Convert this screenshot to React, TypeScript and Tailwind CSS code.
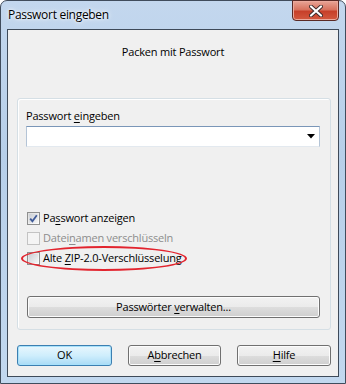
function Check({ checked, disabled }: { checked?: boolean; disabled?: boolean }) {
  return (
    <div
      className={`w-[13px] h-[13px] border flex items-center justify-center ${
        disabled ? 'border-[#c3c3c3] bg-[#f4f4f4]' : 'border-[#8e8f8f] bg-gradient-to-br from-[#dcdcdc] to-[#ffffff]'
      }`}
    >
      <div
        className={`w-[9px] h-[9px] ${
          disabled ? 'bg-[#f4f4f4]' : 'bg-gradient-to-br from-[#cbcfd5] to-[#f6f6f6]'
        } flex items-center justify-center`}
      >
        {checked && (
          <svg width="9" height="9" viewBox="0 0 9 9">
            <path d="M1.2 4.6 L3.4 7.2 L7.8 1.2" fill="none" stroke="#3f5a98" strokeWidth="1.8" />
          </svg>
        )}
      </div>
    </div>
  );
}

function Btn({ children, primary, className = '' }: { children: React.ReactNode; primary?: boolean; className?: string }) {
  return (
    <div
      className={`h-[21px] rounded-[3px] border flex items-center justify-center text-[#000] ${
        primary
          ? 'border-[#3c7fb1] bg-gradient-to-b from-[#e8f6fd] via-[#cfeefc] to-[#a9dbf6] shadow-[inset_0_0_0_1px_#a7e1fb]'
          : 'border-[#707070] bg-[linear-gradient(#f2f2f2_0%,#ebebeb_50%,#dddddd_51%,#cfcfcf_100%)] shadow-[inset_0_0_0_1px_#fcfcfc]'
      } ${className}`}
    >
      {children}
    </div>
  );
}

export default function App() {
  return (
    <div className="w-[346px] h-[384px] bg-white font-['Open_Sans',sans-serif] text-[11px] tracking-[-0.2px] text-black">
      <div className="w-full h-full rounded-t-[7px] border border-[#404c5c] bg-[linear-gradient(180deg,#c3d7ee_0%,#b7cfe9_40%,#c2d8ef_100%)] flex flex-col">
        {/* title bar */}
        <div className="h-[28px] flex items-start">
          <div className="pl-[7px] pt-[5px] text-[12px] tracking-[-0.3px] leading-[18px] text-black [text-shadow:0_0_6px_#ffffff,0_0_3px_#ffffff]">
            Passwort eingeben
          </div>
          <div className="ml-auto mr-[6px] -mt-[1px] w-[47px] h-[21px] rounded-b-[4px] border border-[#5a2a26] bg-[linear-gradient(180deg,#e8a597_0%,#d8735f_45%,#c7402a_55%,#d3593f_100%)] shadow-[inset_0_0_0_1px_#eba99c] flex items-center justify-center">
            <svg width="14" height="12" viewBox="0 0 14 12">
              <path d="M2 1.5 L12 10.5 M12 1.5 L2 10.5" stroke="#3b2a2a" strokeWidth="4" strokeLinecap="round" />
              <path d="M2 1.5 L12 10.5 M12 1.5 L2 10.5" stroke="#ffffff" strokeWidth="2.2" strokeLinecap="round" />
            </svg>
          </div>
        </div>

        {/* client area */}
        <div className="mx-[6px] h-[348px] border border-[#3e4a59] bg-[#f0f0f0] flex flex-col">
          <div className="pt-[14px] h-[30px] text-center leading-[15px]">Packen mit Passwort</div>

          {/* group box */}
          <div className="mt-[38px] ml-[9px] w-[314px] h-[232px] border border-[#d5dfe5] rounded-[3px] shadow-[inset_1px_1px_0_#ffffff] flex flex-col px-[8px]">
            <div className="mt-[9px] h-[16px] leading-[16px]">
              Passwort <span className="underline underline-offset-[2px]">e</span>ingeben
            </div>
            <div className="mt-[2px] w-[294px] h-[21px] border border-[#abadb3] border-t-[#7a96b8] border-b-[#e3e9ef] border-l-[#b4c4d6] border-r-[#b4c4d6] bg-white flex items-center justify-end pr-[4px]">
              <svg width="8" height="5" viewBox="0 0 8 5">
                <path d="M0 0 H8 L4 4.5 Z" fill="#000" />
              </svg>
            </div>

            <div className="mt-[63px] flex flex-col gap-[4px] pl-[1px]">
              <div className="h-[16px] flex items-center gap-[3px]">
                <Check checked />
                <span>
                  Pa<span className="underline underline-offset-[2px]">s</span>swort anzeigen
                </span>
              </div>
              <div className="h-[16px] flex items-center gap-[3px] text-[#8d8d8d]">
                <Check disabled />
                <span>
                  Datei<span className="underline underline-offset-[2px]">n</span>amen verschlüsseln
                </span>
              </div>
              <div className="h-[16px] flex items-center gap-[3px] relative">
                <Check />
                <span>
                  Alte <span className="underline underline-offset-[2px]">Z</span>IP-2.0-Verschlüsselung
                </span>
                <div className="absolute left-[-6px] top-[-4px] w-[166px] h-[25px] rounded-[50%] border-2 border-[#e2242e]" />
              </div>
            </div>

            <Btn className="mt-[30px] ml-[1px] w-[293px] h-[22px]">
              <span>
                Passwörter <span className="underline underline-offset-[2px]">v</span>erwalten...
              </span>
            </Btn>
          </div>

          {/* bottom buttons */}
          <div className="mt-[15px] ml-[9px] flex gap-[16px]">
            <Btn primary className="w-[95px]">OK</Btn>
            <Btn className="w-[93px]">
              <span>
                A<span className="underline underline-offset-[2px]">b</span>brechen
              </span>
            </Btn>
            <Btn className="w-[94px]">
              <span>
                <span className="underline underline-offset-[2px]">H</span>ilfe
              </span>
            </Btn>
          </div>
        </div>
      </div>
    </div>
  );
}
